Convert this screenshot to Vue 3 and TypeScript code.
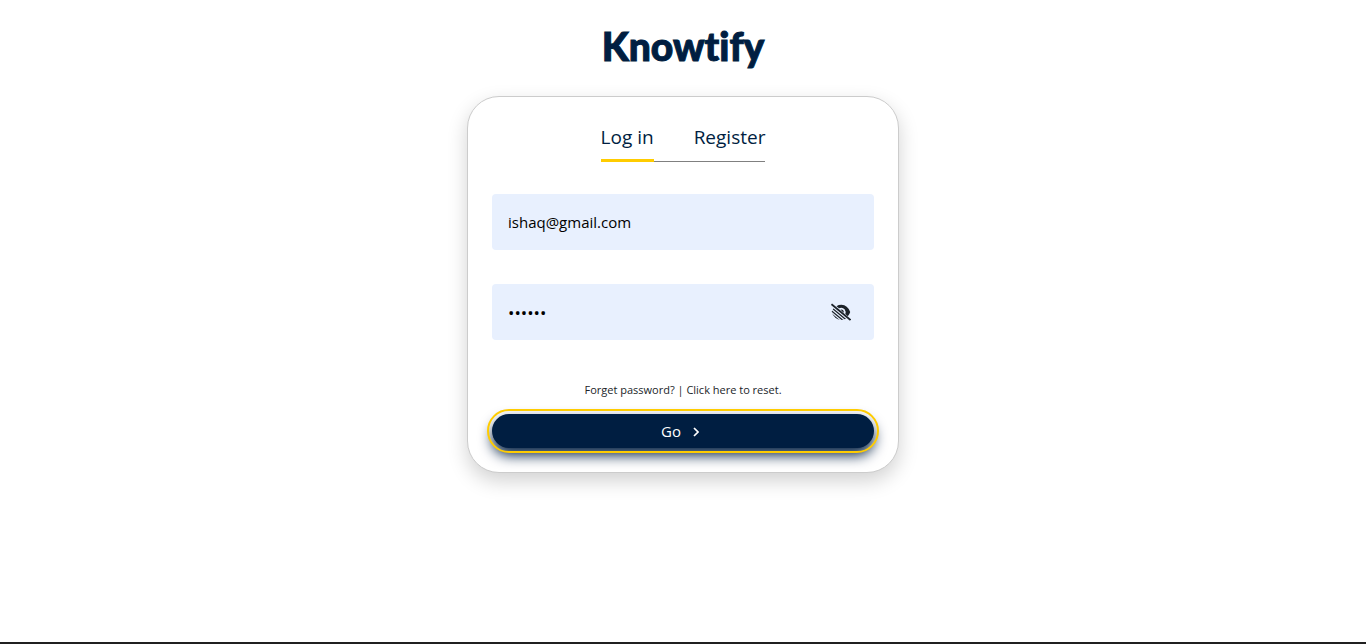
<script setup lang="ts">
import { ref } from 'vue'

type Tab = 'login' | 'register'

const tabs: { id: Tab; label: string }[] = [
  { id: 'login', label: 'Log in' },
  { id: 'register', label: 'Register' },
]
const active = ref<Tab>('login')
const email = ref('ishaq@gmail.com')
const password = ref('secret')
const visible = ref(false)
</script>

<template>
  <main class="page">
    <h1 class="logo">Knowtify</h1>
    <form class="card" @submit.prevent>
      <div class="tabs" role="tablist">
        <button
          v-for="tab in tabs"
          :key="tab.id"
          type="button"
          role="tab"
          class="tab"
          :class="{ active: active === tab.id }"
          :aria-selected="active === tab.id"
          @click="active = tab.id"
        >{{ tab.label }}</button>
      </div>
      <div class="field">
        <input v-model="email" class="input" type="email" aria-label="Email" />
      </div>
      <div class="field">
        <input v-model="password" class="input secret" :type="visible ? 'text' : 'password'" aria-label="Password" />
        <button class="eye" type="button" aria-label="Toggle password visibility" @click="visible = !visible">
          <svg width="20" height="18" viewBox="0 0 20 18" fill="none" stroke="#1c2229" aria-hidden="true">
            <defs>
              <clipPath id="lower-eye">
                <path d="M0.500 9Q1.500 6 3.500 4.200L16.500 15Q13.500 17 10 17Q3.500 16.500 0.500 9Z" />
              </clipPath>
            </defs>
            <path d="M5.500 3.200Q7.500 1.800 10.500 1.800Q16.500 2 19.200 9Q18.500 11.500 16.800 13.200L14.300 11.100Q15.200 8.500 13.600 6.300Q11.200 3.700 8 5.300Z" fill="#1c2229" stroke="none" />
            <path d="M9.500 6.500Q12.700 6 13 9.800L11.500 8.700Z" fill="#1c2229" stroke="none" />
            <path d="M0.500 1.200L19.500 17" stroke-width="1.700" />
            <g clip-path="url(#lower-eye)" stroke-width="1.300">
              <path d="M0 4.200L19 20M0 7.400L19 23.200M-1 9.800L18 25.600" />
            </g>
          </svg>
        </button>
      </div>
      <a class="forgot" href="#">Forget password? | Click here to reset.</a>
      <button class="go" type="submit">
        <span>Go</span>
        <svg width="6" height="12" viewBox="0 0 6 12" fill="none" stroke="#fff" stroke-width="1.700" aria-hidden="true">
          <path d="M1 3L5 7L1 11" />
        </svg>
      </button>
    </form>
  </main>
</template>

<style>
body {
  margin: 0;
  background: #fff;
}
</style>

<style scoped>
.page {
  box-sizing: border-box;
  min-height: 100vh;
  padding: 18px 16px;
  border-bottom: 2px solid #202020;
  display: flex;
  flex-direction: column;
  align-items: center;
  font-family: "Open Sans", "Noto Sans", sans-serif;
  color: #001e41;
}
.logo {
  margin: 0 0 22px;
  font: 900 39px/56px Lato, sans-serif;
  font-variant-ligatures: none;
  -webkit-text-stroke: 1px #001e41;
}
.card {
  box-sizing: border-box;
  width: 100%;
  max-width: 432px;
  padding: 24px;
  border: 1px solid #ccc;
  border-radius: 32px;
  background: #fff;
  box-shadow: 0 8px 20px rgba(0, 0, 0, 0.18);
  display: flex;
  flex-direction: column;
  align-items: center;
}
.tabs {
  display: flex;
  gap: 40px;
  margin-bottom: 32px;
  box-shadow: inset 0 -1px #808080;
}
button {
  font-family: inherit;
  border: 0;
  cursor: pointer;
}
.tab {
  padding: 0 0 6px;
  border-bottom: 3px solid transparent;
  background: none;
  color: inherit;
  font-size: 19px;
  line-height: 32px;
}
.tab.active {
  border-bottom-color: #ffcc00;
}
.field {
  position: relative;
  width: 100%;
  margin-bottom: 34px;
}
.input {
  display: block;
  box-sizing: border-box;
  width: 100%;
  height: 56px;
  padding: 0 16px;
  border: 0;
  border-radius: 4px;
  background: #e8f0fe;
  color: #000;
  font: 15px/24px "Open Sans", "Noto Sans", sans-serif;
  outline: 0;
}
.secret[type="password"] {
  font-size: 17px;
}
.eye {
  position: absolute;
  top: 16px;
  right: 21px;
  display: flex;
  align-items: center;
  height: 24px;
  padding: 0 2px;
  background: none;
}
.forgot {
  margin: 6px 0 14px;
  color: #212529;
  font-size: 11px;
  line-height: 20px;
  text-decoration: none;
}
.go {
  display: flex;
  align-items: center;
  justify-content: center;
  gap: 12px;
  width: 100%;
  height: 34px;
  padding: 0 6px 0 0;
  border-radius: 17px;
  background: #001e41;
  color: #fff;
  font-size: 15px;
  line-height: 24px;
  outline: 2px solid #ffcc00;
  outline-offset: 3px;
  box-shadow: 0 7px 14px #001e41;
}
</style>
